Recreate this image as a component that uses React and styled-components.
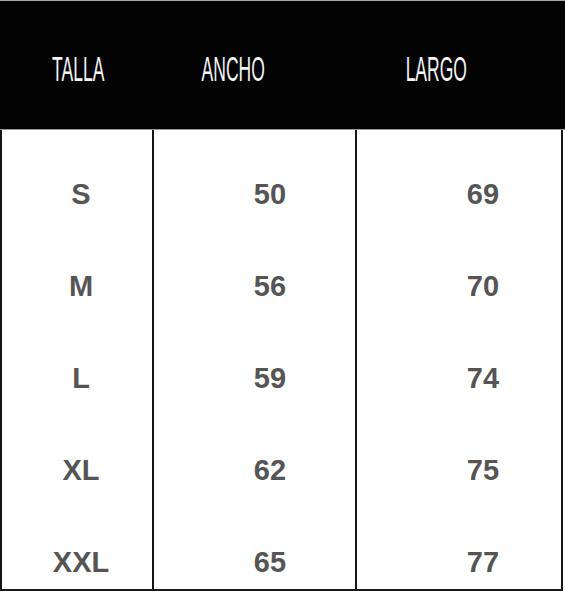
import styled, { createGlobalStyle } from 'styled-components';

const GlobalStyle = createGlobalStyle`
    html, body {
        margin: 0;
        padding: 0;
        background-color: #ffffff;
    }
`;

const sizes = [
    { talla: 'S', ancho: 50, largo: 69 },
    { talla: 'M', ancho: 56, largo: 70 },
    { talla: 'L', ancho: 59, largo: 74 },
    { talla: 'XL', ancho: 62, largo: 75 },
    { talla: 'XXL', ancho: 65, largo: 77 },
];

const columns = [
    { key: 'talla', title: 'TALLA', width: 152, head: 4, body: 8 },
    { key: 'ancho', title: 'ANCHO', width: 203, head: -40, body: 31 },
    { key: 'largo', title: 'LARGO', width: 208, head: -46, body: 48 },
];

export default function App() {
    return (
        <>
            <GlobalStyle />
            <Table>
                <Header>
                    {columns.map((col) => (
                        <HeadCell key={col.key} $width={col.width} $offset={col.head}>
                            <HeadText>{col.title}</HeadText>
                        </HeadCell>
                    ))}
                </Header>
                <Body>
                    {columns.map((col, i) => (
                        <Column key={col.key} $width={col.width} $last={i === columns.length - 1}>
                            {sizes.map((row) => (
                                <Cell key={row.talla} $offset={col.body}>{row[col.key]}</Cell>
                            ))}
                        </Column>
                    ))}
                </Body>
            </Table>
        </>
    );
}

/**************************** css ****************************/

const Table = styled.div`
    width: 565px;
    border-top: 1px solid #a9a9a9;
    background-color: #ffffff;
`;

const Header = styled.div`
    display: flex;
    height: 128px;
    background-color: #030304;
    border-bottom: 1px solid #9a9a9a;
`;

const HeadCell = styled.div`
    width: ${(p) => p.$width}px;
    display: flex;
    justify-content: center;
    align-items: center;
    padding-top: 7px;
    box-sizing: border-box;
    padding-left: ${(p) => (p.$offset > 0 ? p.$offset : 0)}px;
    padding-right: ${(p) => (p.$offset < 0 ? -p.$offset : 0)}px;
`;

const HeadText = styled.span`
    display: inline-block;
    font-family: "Liberation Sans Narrow", "Liberation Sans", sans-serif;
    font-size: 35px;
    line-height: 35px;
    color: #f4f4f4;
    transform: scaleX(0.5);
`;

const Body = styled.div`
    display: flex;
    width: 563px;
    border-bottom: 2px solid #1a1a1a;
`;

const Column = styled.div`
    width: ${(p) => p.$width}px;
    box-sizing: border-box;
    display: flex;
    flex-direction: column;
    gap: 60px;
    padding: 48px 0 11px;
    border-left: 2px solid #151515;
    border-right: ${(p) => (p.$last ? '2px solid #151515' : 'none')};
`;

const Cell = styled.div`
    height: 32px;
    line-height: 32px;
    text-align: center;
    padding-left: ${(p) => p.$offset}px;
    font-family: "Liberation Sans", Arial, sans-serif;
    font-weight: 700;
    font-size: 29px;
    color: #555555;
`;
